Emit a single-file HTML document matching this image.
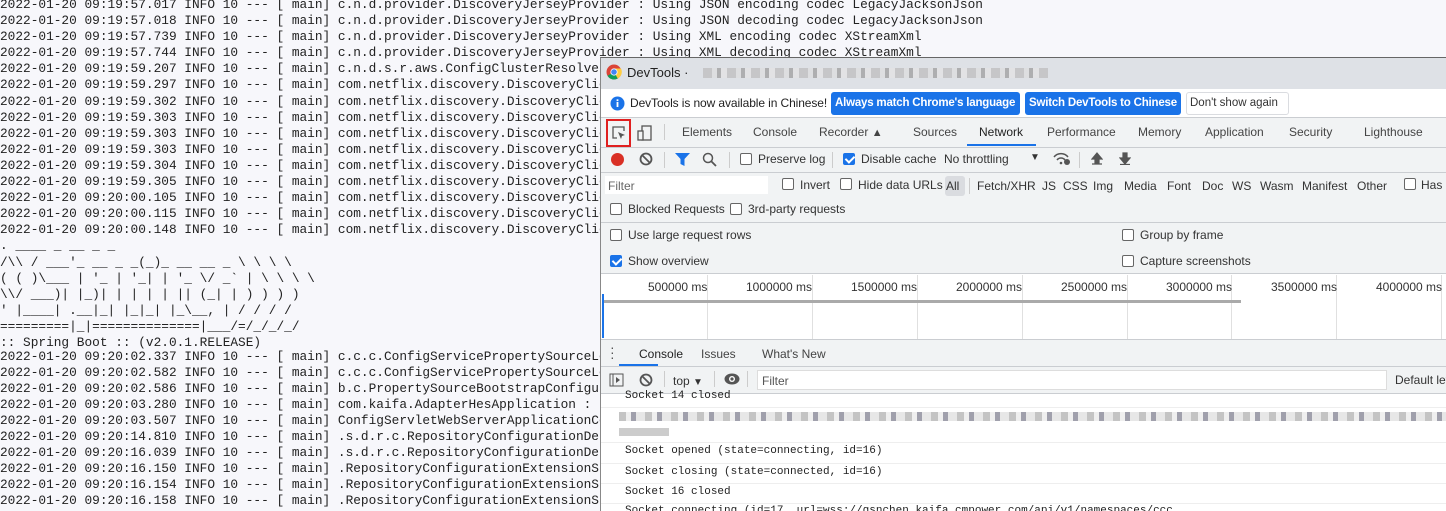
<!DOCTYPE html><html><head><meta charset="utf-8"><style>
*{margin:0;padding:0;box-sizing:border-box}
body{width:1446px;height:511px;overflow:hidden;background:#f7f7fb;position:relative;font-family:"Liberation Sans",sans-serif}
.log{position:absolute;left:0;font-family:"Liberation Mono",monospace;white-space:pre;color:#222;font-size:12.8px}
.dt{position:absolute;left:600px;top:57px;width:846px;height:454px;background:#f1f3f4;border-left:1px solid #888;border-top:1px solid #666;overflow:hidden;font-size:12px;color:#333}
.a{position:absolute;white-space:nowrap}
.cb{position:absolute;width:12px;height:12px;border:1px solid #666;border-radius:2px;background:#fff}
.cb.on{background:#1a73e8;border-color:#1a73e8}
.cb.on:after{content:"";position:absolute;left:3px;top:0px;width:4px;height:7px;border:solid #fff;border-width:0 2px 2px 0;transform:rotate(45deg)}
.hl{position:absolute;left:0;right:0;height:1px;background:#cacdd1}
.btn{position:absolute;height:23px;background:#1a73e8;color:#fff;font-weight:bold;border-radius:3px;padding:0 4px;line-height:23px;font-size:11.5px;letter-spacing:-0.2px}
.tk{position:absolute;top:217px;width:1px;height:65px;background:#e0e0e0}
.msg{position:absolute;left:24px;font-family:"Liberation Mono",monospace;font-size:11px;color:#222}
</style></head><body>
<div class="log" style="top:-3px;line-height:16.1px">2022-01-20 09:19:57.017 INFO 10 --- [ main] c.n.d.provider.DiscoveryJerseyProvider : Using JSON encoding codec LegacyJacksonJson
2022-01-20 09:19:57.018 INFO 10 --- [ main] c.n.d.provider.DiscoveryJerseyProvider : Using JSON decoding codec LegacyJacksonJson
2022-01-20 09:19:57.739 INFO 10 --- [ main] c.n.d.provider.DiscoveryJerseyProvider : Using XML encoding codec XStreamXml
2022-01-20 09:19:57.744 INFO 10 --- [ main] c.n.d.provider.DiscoveryJerseyProvider : Using XML decoding codec XStreamXml
2022-01-20 09:19:59.207 INFO 10 --- [ main] c.n.d.s.r.aws.ConfigClusterResolver
2022-01-20 09:19:59.297 INFO 10 --- [ main] com.netflix.discovery.DiscoveryClient
2022-01-20 09:19:59.302 INFO 10 --- [ main] com.netflix.discovery.DiscoveryClient
2022-01-20 09:19:59.303 INFO 10 --- [ main] com.netflix.discovery.DiscoveryClient
2022-01-20 09:19:59.303 INFO 10 --- [ main] com.netflix.discovery.DiscoveryClient
2022-01-20 09:19:59.303 INFO 10 --- [ main] com.netflix.discovery.DiscoveryClient
2022-01-20 09:19:59.304 INFO 10 --- [ main] com.netflix.discovery.DiscoveryClient
2022-01-20 09:19:59.305 INFO 10 --- [ main] com.netflix.discovery.DiscoveryClient
2022-01-20 09:20:00.105 INFO 10 --- [ main] com.netflix.discovery.DiscoveryClient
2022-01-20 09:20:00.115 INFO 10 --- [ main] com.netflix.discovery.DiscoveryClient
2022-01-20 09:20:00.148 INFO 10 --- [ main] com.netflix.discovery.DiscoveryClient
. ____ _ __ _ _
/\\ / ___'_ __ _ _(_)_ __ __ _ \ \ \ \
( ( )\___ | '_ | '_| | '_ \/ _` | \ \ \ \
\\/ ___)| |_)| | | | | || (_| | ) ) ) )
' |____| .__|_| |_|_| |_\__, | / / / /
=========|_|==============|___/=/_/_/_/
:: Spring Boot :: (v2.0.1.RELEASE)</div>
<div class="log" style="top:349px;line-height:16px">2022-01-20 09:20:02.337 INFO 10 --- [ main] c.c.c.ConfigServicePropertySourceLocator
2022-01-20 09:20:02.582 INFO 10 --- [ main] c.c.c.ConfigServicePropertySourceLocator
2022-01-20 09:20:02.586 INFO 10 --- [ main] b.c.PropertySourceBootstrapConfiguration
2022-01-20 09:20:03.280 INFO 10 --- [ main] com.kaifa.AdapterHesApplication :
2022-01-20 09:20:03.507 INFO 10 --- [ main] ConfigServletWebServerApplicationContext
2022-01-20 09:20:14.810 INFO 10 --- [ main] .s.d.r.c.RepositoryConfigurationDelegate
2022-01-20 09:20:16.039 INFO 10 --- [ main] .s.d.r.c.RepositoryConfigurationDelegate
2022-01-20 09:20:16.150 INFO 10 --- [ main] .RepositoryConfigurationExtensionSupport
2022-01-20 09:20:16.154 INFO 10 --- [ main] .RepositoryConfigurationExtensionSupport
2022-01-20 09:20:16.158 INFO 10 --- [ main] .RepositoryConfigurationExtensionSupport</div>

<div class="dt">
<div style="position:absolute;left:0;top:0;width:846px;height:31px;background:#dee1e6"></div>
<svg class="a" style="left:5px;top:6px" width="16" height="16" viewBox="0 0 16 16"><circle cx="8" cy="8" r="7.5" fill="#db4437"/><path d="M8 8 L1.5 11.8 A7.5 7.5 0 0 0 11.8 14.5Z" fill="#0f9d58"/><path d="M8 8 L11.8 14.5 A7.5 7.5 0 0 0 15 4.5 L8 4.5Z" fill="#ffcd40"/><circle cx="8" cy="8" r="3.6" fill="#fff"/><circle cx="8" cy="8" r="2.8" fill="#4285f4"/></svg>
<div class="a" style="left:26px;top:7px;font-size:13px;color:#222">DevTools ·</div>
<div class="a" style="left:102px;top:10px;width:345px;height:10px;background:repeating-linear-gradient(90deg,#bbb 0 9px,#ddd 9px 14px,#999 14px 18px,#e3e3e3 18px 24px);opacity:.7"></div>
<div style="position:absolute;left:0;top:31px;width:846px;height:29px;background:#fff;border-bottom:1px solid #cacdd1"></div>
<svg class="a" style="left:9px;top:38px" width="15" height="15"><circle cx="7.5" cy="7.5" r="7" fill="#1a73e8"/><rect x="6.6" y="6" width="1.8" height="5" fill="#fff"/><rect x="6.6" y="3.3" width="1.8" height="1.8" fill="#fff"/></svg>
<div class="a" style="left:29px;top:38px;font-size:12px;letter-spacing:-0.1px;color:#222">DevTools is now available in Chinese!</div>
<div class="btn" style="left:230px;top:34px;width:189px">Always match Chrome's language</div>
<div class="btn" style="left:424px;top:34px;width:156px">Switch DevTools to Chinese</div>
<div class="a" style="left:585px;top:34px;width:103px;height:23px;border:1px solid #dadce0;border-radius:3px;padding:0 3px;line-height:21px;font-size:11.5px;background:#fff">Don't show again</div>
<!-- tabs -->
<div class="a" style="left:5px;top:61px;width:25px;height:28px;border:2px solid #e02020"></div>
<svg class="a" style="left:10px;top:67px" width="16" height="16"><path d="M6 13H2V2h11v4" fill="none" stroke="#555" stroke-width="1.3"/><path d="M7 7l7 3-3 1-1 3z" fill="#555"/></svg>
<svg class="a" style="left:36px;top:67px" width="16" height="16"><rect x="5" y="1" width="9" height="14" fill="none" stroke="#555" stroke-width="1.3"/><rect x="1" y="6" width="5" height="9" fill="#f1f3f4" stroke="#555" stroke-width="1.3"/></svg>
<div class="a" style="left:63px;top:66px;width:1px;height:16px;background:#ccc"></div>
<div class="a" style="left:81px;top:67px;color:#444">Elements</div>
<div class="a" style="left:152px;top:67px;color:#444">Console</div>
<div class="a" style="left:218px;top:67px;color:#444">Recorder <span style="font-size:11px">&#9650;</span></div>
<div class="a" style="left:312px;top:67px;color:#444">Sources</div>
<div class="a" style="left:378px;top:67px;color:#222">Network</div>
<div class="a" style="left:366px;top:86px;width:69px;height:2px;background:#1a73e8"></div>
<div class="a" style="left:446px;top:67px;color:#444">Performance</div>
<div class="a" style="left:537px;top:67px;color:#444">Memory</div>
<div class="a" style="left:604px;top:67px;color:#444">Application</div>
<div class="a" style="left:688px;top:67px;color:#444">Security</div>
<div class="a" style="left:763px;top:67px;color:#444">Lighthouse</div>
<div class="hl" style="top:89px"></div>
<!-- toolbar -->
<div class="a" style="left:10px;top:95px;width:13px;height:13px;border-radius:50%;background:#d93025"></div>
<svg class="a" style="left:38px;top:94px" width="14" height="14"><circle cx="7" cy="7" r="5.5" fill="none" stroke="#555" stroke-width="1.8"/><path d="M3 3l8 8" stroke="#555" stroke-width="1.8"/></svg>
<div class="a" style="left:63px;top:94px;width:1px;height:16px;background:#ccc"></div>
<svg class="a" style="left:74px;top:95px" width="15" height="13"><path d="M0 0h15l-5.5 6v7l-4-2V6z" fill="#1a73e8"/></svg>
<svg class="a" style="left:101px;top:94px" width="15" height="15"><circle cx="6" cy="6" r="4.5" fill="none" stroke="#555" stroke-width="1.5"/><path d="M9.5 9.5l4.5 4.5" stroke="#555" stroke-width="1.8"/></svg>
<div class="a" style="left:128px;top:94px;width:1px;height:16px;background:#ccc"></div>
<div class="cb" style="left:139px;top:95px"></div><div class="a" style="left:157px;top:94px">Preserve log</div>
<div class="a" style="left:231px;top:94px;width:1px;height:16px;background:#ccc"></div>
<div class="cb on" style="left:242px;top:95px"></div><div class="a" style="left:260px;top:94px">Disable cache</div>
<div class="a" style="left:343px;top:94px">No throttling</div>
<div class="a" style="left:429px;top:94px;font-size:10px">&#9660;</div>
<svg class="a" style="left:452px;top:93px" width="18" height="15"><path d="M1 6a9 9 0 0 1 14 0M4 9a5 5 0 0 1 8 0" fill="none" stroke="#555" stroke-width="1.5"/><circle cx="8" cy="12" r="1.3" fill="#555"/><circle cx="14" cy="11" r="3" fill="#555"/></svg>
<div class="a" style="left:478px;top:94px;width:1px;height:16px;background:#ccc"></div>
<svg class="a" style="left:490px;top:94px" width="12" height="13"><path d="M6 1L1 7h3v4h4V7h3z M1 12h10" fill="#555" stroke="#555" stroke-width="1.2"/></svg>
<svg class="a" style="left:518px;top:94px" width="12" height="13"><path d="M6 12L1 6h3V1h4v5h3z M1 12.5h10" fill="#555" stroke="#555" stroke-width="1.2"/></svg>
<div class="hl" style="top:114px"></div>
<!-- filter row -->
<div class="a" style="left:4px;top:118px;width:163px;height:18px;background:#fff;color:#666;padding:3px 3px">Filter</div>
<div class="cb" style="left:181px;top:120px"></div><div class="a" style="left:199px;top:120px">Invert</div>
<div class="cb" style="left:239px;top:120px"></div><div class="a" style="left:257px;top:120px">Hide data URLs</div>
<div class="a" style="left:344px;top:118px;width:20px;height:20px;background:#dadce0;border-radius:3px;padding:3px 1px">All</div>
<div class="a" style="left:368px;top:120px;width:1px;height:16px;background:#ccc"></div>
<div class="a" style="left:376px;top:121px">Fetch/XHR</div>
<div class="a" style="left:441px;top:121px">JS</div>
<div class="a" style="left:462px;top:121px">CSS</div>
<div class="a" style="left:492px;top:121px">Img</div>
<div class="a" style="left:523px;top:121px">Media</div>
<div class="a" style="left:566px;top:121px">Font</div>
<div class="a" style="left:601px;top:121px">Doc</div>
<div class="a" style="left:631px;top:121px">WS</div>
<div class="a" style="left:659px;top:121px">Wasm</div>
<div class="a" style="left:701px;top:121px">Manifest</div>
<div class="a" style="left:756px;top:121px">Other</div>
<div class="cb" style="left:803px;top:120px"></div><div class="a" style="left:820px;top:120px">Has b</div>
<div class="cb" style="left:9px;top:145px"></div><div class="a" style="left:27px;top:144px">Blocked Requests</div>
<div class="cb" style="left:129px;top:145px"></div><div class="a" style="left:147px;top:144px">3rd-party requests</div>
<div class="hl" style="top:164px"></div>
<div class="cb" style="left:9px;top:171px"></div><div class="a" style="left:27px;top:170px">Use large request rows</div>
<div class="cb on" style="left:9px;top:197px"></div><div class="a" style="left:27px;top:196px">Show overview</div>
<div class="cb" style="left:521px;top:171px"></div><div class="a" style="left:539px;top:170px">Group by frame</div>
<div class="cb" style="left:521px;top:197px"></div><div class="a" style="left:539px;top:196px">Capture screenshots</div>
<div class="hl" style="top:215px"></div>
<!-- overview -->
<div style="position:absolute;left:0;top:216px;width:846px;height:65px;background:#fff"></div>
<div class="a" style="left:1px;top:236px;width:2px;height:44px;background:#1a73e8"></div>
<div class="tk" style="left:106px"></div><div class="tk" style="left:211px"></div><div class="tk" style="left:316px"></div><div class="tk" style="left:421px"></div><div class="tk" style="left:526px"></div><div class="tk" style="left:630px"></div><div class="tk" style="left:735px"></div><div class="tk" style="left:840px"></div>
<div class="a" style="left:47px;top:222px">500000 ms</div>
<div class="a" style="left:145px;top:222px">1000000 ms</div>
<div class="a" style="left:250px;top:222px">1500000 ms</div>
<div class="a" style="left:355px;top:222px">2000000 ms</div>
<div class="a" style="left:460px;top:222px">2500000 ms</div>
<div class="a" style="left:565px;top:222px">3000000 ms</div>
<div class="a" style="left:670px;top:222px">3500000 ms</div>
<div class="a" style="left:775px;top:222px">4000000 ms</div>
<div class="a" style="left:3px;top:242px;width:637px;height:3px;background:#aaa"></div>
<div class="hl" style="top:281px"></div>
<!-- drawer -->
<div class="a" style="left:9px;top:287px;font-size:14px;line-height:5px;color:#555">·<br>·<br>·</div>
<div class="a" style="left:38px;top:289px;color:#222">Console</div>
<div class="a" style="left:18px;top:306px;width:39px;height:2px;background:#1a73e8"></div>
<div class="a" style="left:100px;top:289px;color:#444">Issues</div>
<div class="a" style="left:161px;top:289px;color:#444">What's New</div>
<div class="hl" style="top:308px"></div>
<svg class="a" style="left:8px;top:315px" width="15" height="14"><rect x="1" y="1" width="13" height="12" fill="none" stroke="#555"/><path d="M4 1v12" stroke="#555"/><path d="M7 4l4 3-4 3z" fill="#555"/></svg>
<svg class="a" style="left:38px;top:315px" width="14" height="14"><circle cx="7" cy="7" r="5.5" fill="none" stroke="#555" stroke-width="1.8"/><path d="M3 3l8 8" stroke="#555" stroke-width="1.8"/></svg>
<div class="a" style="left:63px;top:313px;width:1px;height:16px;background:#ccc"></div>
<div class="a" style="left:72px;top:316px">top <span style="font-size:10px">&#9660;</span></div>
<div class="a" style="left:113px;top:313px;width:1px;height:16px;background:#ccc"></div>
<svg class="a" style="left:123px;top:315px" width="16" height="12"><ellipse cx="8" cy="6" rx="7.5" ry="5.5" fill="#555"/><circle cx="8" cy="6" r="3" fill="#fff"/><circle cx="8" cy="6" r="1.6" fill="#555"/></svg>
<div class="a" style="left:146px;top:313px;width:1px;height:16px;background:#ccc"></div>
<div class="a" style="left:156px;top:312px;width:630px;height:20px;background:#fff;border:1px solid #ddd;color:#555;padding:3px 4px">Filter</div>
<div class="a" style="left:794px;top:315px;color:#333">Default lev</div>
<div class="hl" style="top:335px"></div>
<div style="position:absolute;left:0;top:336px;width:846px;height:120px;background:#fff"></div>
<div class="msg" style="top:332px">Socket 14 closed</div>
<div class="hl" style="top:349px;background:#eee"></div>
<div class="a" style="left:18px;top:354px;width:828px;height:9px;background:repeating-linear-gradient(90deg,#aaa 0 7px,#e8e8e8 7px 12px,#778 12px 17px,#ddd 17px 26px);opacity:.7"></div>
<div class="a" style="left:18px;top:370px;width:50px;height:8px;background:#ccc"></div>
<div class="hl" style="top:384px;background:#eee"></div>
<div class="msg" style="top:387px">Socket opened (state=connecting, id=16)</div>
<div class="hl" style="top:405px;background:#eee"></div>
<div class="msg" style="top:408px">Socket closing (state=connected, id=16)</div>
<div class="hl" style="top:425px;background:#eee"></div>
<div class="msg" style="top:428px">Socket 16 closed</div>
<div class="hl" style="top:445px;background:#eee"></div>
<div class="msg" style="top:447px">Socket connecting (id=17, url=wss://gsnchen.kaifa.cmpower.com/api/v1/namespaces/ccc...</div>
</div>
</body></html>
